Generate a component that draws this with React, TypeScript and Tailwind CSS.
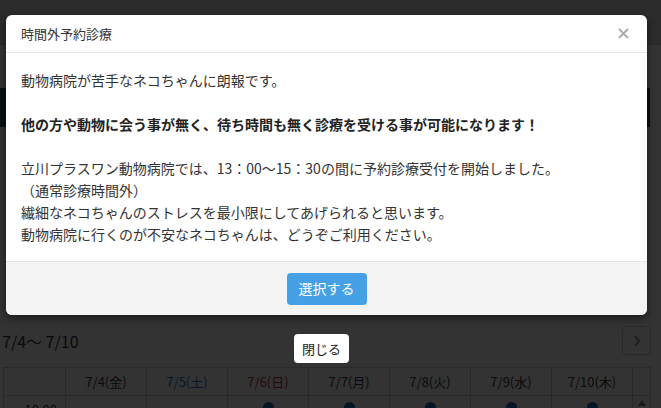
import React from "react";

const days = [
  { label: "7/4(金)", color: "text-[#333]" },
  { label: "7/5(土)", color: "text-[#2a6fc9]" },
  { label: "7/6(日)", color: "text-[#d02a2a]" },
  { label: "7/7(月)", color: "text-[#333]" },
  { label: "7/8(火)", color: "text-[#333]" },
  { label: "7/9(水)", color: "text-[#333]" },
  { label: "7/10(木)", color: "text-[#333]" },
];

const font = "font-['Noto_Sans_CJK_JP','Noto_Sans',sans-serif]";

export default function App() {
  return (
    <div className={`relative w-[661px] h-[408px] overflow-hidden bg-white ${font}`}>
      {/* page behind the overlay */}
      <div className="h-[45px] bg-[#dcdcdc] border-b border-[#c8c8c8]" />
      <div className="mt-[43px] h-[39px] w-[650px] bg-[#2a4d75]" />
      <div className="mt-[199px] flex items-center justify-between w-[651px] pl-[2px]">
        <span className="text-[16px] text-[#333] leading-none">7/4～ 7/10</span>
        <div className="w-[29px] h-[29px] border border-[#ccc] rounded-[4px] flex items-center justify-center">
          <svg width="8" height="12" viewBox="0 0 8 12">
            <path d="M2 1 L6 6 L2 11" stroke="#999" strokeWidth="2.2" fill="none" />
          </svg>
        </div>
      </div>
      <div className="mt-[12px] ml-[3px] w-[648px] border-t border-l border-[#ccc]">
        <div className="flex h-[28px]">
          <div className="w-[62px] border-r border-b border-[#ccc]" />
          {days.map((d) => (
            <div
              key={d.label}
              className={`w-[81px] border-r border-b border-[#ccc] flex items-center justify-center text-[13px] ${d.color}`}
            >
              {d.label}
            </div>
          ))}
          <div className="flex-1 border-r border-b border-[#ccc]" />
        </div>
        <div className="flex h-[28px]">
          <div className="w-[62px] border-r border-[#ccc] text-[13px] text-[#333] text-right pr-[8px] pt-[4px]">10:00</div>
          {days.map((d, i) => (
            <div key={d.label} className="w-[81px] border-r border-[#ccc] flex justify-center pt-[6px]">
              {i >= 2 && <span className="w-[11px] h-[11px] rounded-full bg-[#2466b8]" />}
            </div>
          ))}
          <div className="flex-1 border-r border-[#ccc] flex justify-center pt-[4px]">
            <svg width="8" height="6" viewBox="0 0 8 6">
              <path d="M4 0 L8 6 L0 6 Z" fill="#777" />
            </svg>
          </div>
        </div>
      </div>

      {/* overlay */}
      <div className="absolute inset-0 bg-black/80" />

      {/* modal */}
      <div className="absolute left-[6px] top-[15px] w-[641px] bg-white rounded-[6px] overflow-hidden shadow-[0_3px_9px_rgba(0,0,0,0.5)]">
        <div className="h-[38px] flex items-center justify-between pl-[15px] pr-[18px] border-b border-[#e5e5e5]">
          <span className="text-[13px] text-[#333]">時間外予約診療</span>
          <svg width="11" height="11" viewBox="0 0 11 11">
            <path d="M1 1 L10 10 M10 1 L1 10" stroke="#aaa" strokeWidth="1.8" />
          </svg>
        </div>
        <div className="px-[15px] pt-[16px] pb-[16px] text-[14px] leading-[22px] text-[#333]">
          <p>動物病院が苦手なネコちゃんに朗報です。</p>
          <br />
          <p className="font-bold text-[#222]">
            他の方や動物に会う事が無く、待ち時間も無く診療を受ける事が可能になります！
          </p>
          <br />
          <p>立川プラスワン動物病院では、13：00～15：30の間に予約診療受付を開始しました。</p>
          <p>（通常診療時間外）</p>
          <p>繊細なネコちゃんのストレスを最小限にしてあげられると思います。</p>
          <p>動物病院に行くのが不安なネコちゃんは、どうぞご利用ください。</p>
        </div>
        <div className="border-t border-[#e5e5e5] bg-[#f4f4f4] h-[54px] flex items-center justify-center">
          <button className="w-[80px] h-[32px] rounded-[4px] bg-[#45a0e6] text-white text-[14px]">
            選択する
          </button>
        </div>
      </div>

      {/* close button */}
      <button className="absolute left-[294px] top-[334px] w-[55px] h-[29px] bg-white rounded-[4px] text-[13px] text-[#222]">
        閉じる
      </button>
    </div>
  );
}
